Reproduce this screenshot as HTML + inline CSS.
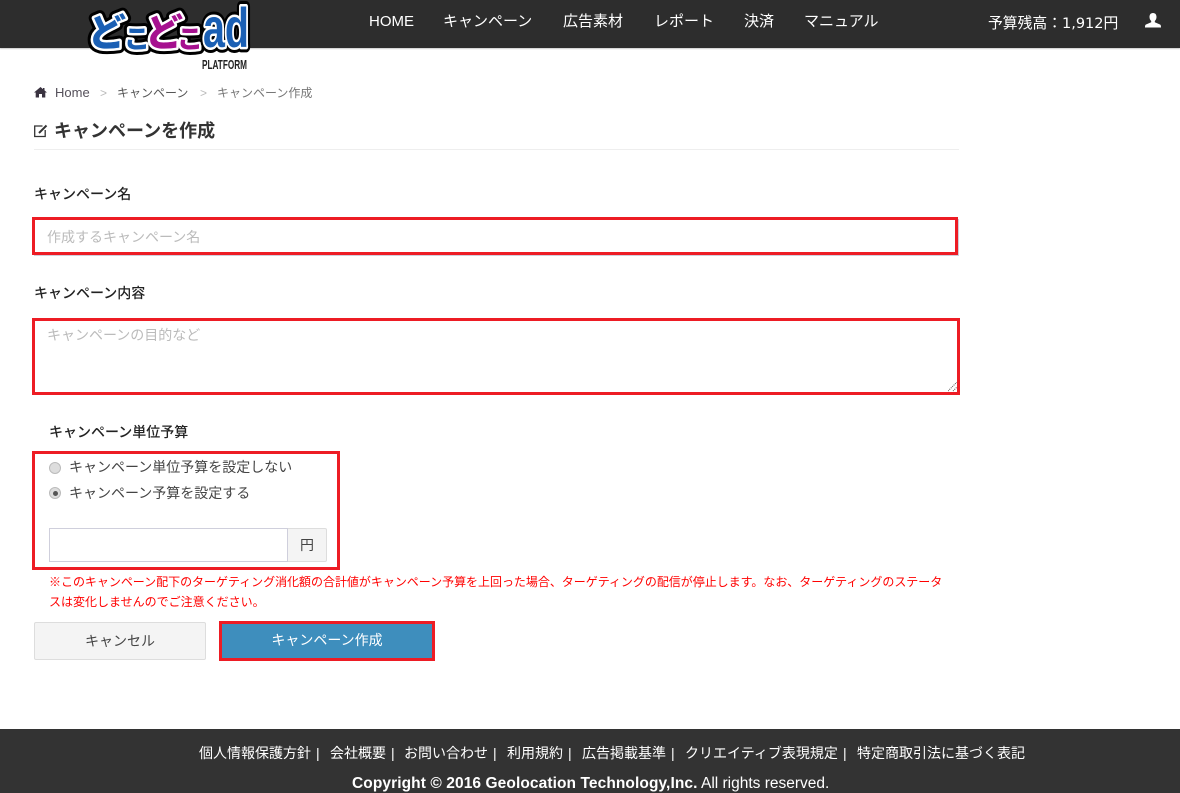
<!DOCTYPE html>
<html lang="ja"><head><meta charset="utf-8"><title>キャンペーンを作成</title>
<style>
*{box-sizing:border-box}
html,body{margin:0;padding:0;width:1180px;height:793px;overflow:hidden;background:#fff}
body{font-family:"Liberation Sans","Noto Sans CJK JP",sans-serif;color:#333;position:relative}
.t{position:absolute;white-space:nowrap;line-height:20px;height:20px}
.b{position:absolute}
.red{position:absolute;border:3px solid #ed1c24}
.w{color:#fff}
.k{stroke:#000;stroke-width:11;stroke-linejoin:round}
.h{stroke:#fff;stroke-width:5;stroke-linejoin:round}
</style></head><body>

<div class="b" style="left:0;top:0;width:1180px;height:48px;background:#2d2d2d;box-shadow:0 1px 1px #ccc"></div>

<svg class="b" style="left:80px;top:0" width="180" height="74" viewBox="0 0 180 74">
<g font-family="'Noto Sans CJK JP',sans-serif" font-weight="900">
<g class="k"><text x="8" y="46" font-size="38">ど</text><text x="44" y="48" font-size="26">こ</text><text x="65" y="46" font-size="38">ど</text><text x="97" y="48" font-size="26">こ</text></g>
<g class="h" fill="#fff"><text x="8" y="46" font-size="38">ど</text><text x="44" y="48" font-size="26">こ</text><text x="65" y="46" font-size="38">ど</text><text x="97" y="48" font-size="26">こ</text></g>
<text x="8" y="46" font-size="38" fill="#1a5fb4">ど</text><text x="44" y="48" font-size="26" fill="#1a5fb4">こ</text>
<text x="65" y="46" font-size="38" fill="#a6118f">ど</text><text x="97" y="48" font-size="26" fill="#a6118f">こ</text>
</g>
<g font-family="'Liberation Sans',sans-serif" font-weight="700" font-size="56">
<text x="123" y="47" textLength="46" lengthAdjust="spacingAndGlyphs" class="k">ad</text>
<text x="123" y="47" textLength="46" lengthAdjust="spacingAndGlyphs" class="h" fill="#fff">ad</text>
<text x="123" y="47" textLength="46" lengthAdjust="spacingAndGlyphs" fill="#1a5fb4">ad</text>
</g>
<text x="122" y="69" font-family="'Liberation Sans',sans-serif" font-weight="700" font-size="13" textLength="45" lengthAdjust="spacingAndGlyphs" fill="#222">PLATFORM</text>
</svg>

<div class="t w" style="left:369px;top:12px;font-size:15px">HOME</div>
<div class="t w" style="left:443px;top:12px;font-size:15px">キャンペーン</div>
<div class="t w" style="left:563px;top:12px;font-size:15px">広告素材</div>
<div class="t w" style="left:654px;top:12px;font-size:15px">レポート</div>
<div class="t w" style="left:744px;top:12px;font-size:15px">決済</div>
<div class="t w" style="left:804px;top:12px;font-size:15px">マニュアル</div>
<div class="t w" style="left:988px;top:13.500px;font-size:14.800px">予算残高：<span style="font-family:'DejaVu Sans','Noto Sans CJK JP',sans-serif;font-size:14.500px">1,912</span>円</div>
<svg class="b" style="left:1145px;top:13px" width="16" height="15" viewBox="0 0 16 15"><path d="M8 0C5.600 0 4.500 1.800 4.500 4c0 1.800.8 3.200 1.700 4v1.300L1 11.500C.3 11.900 0 12.500 0 14.500h16c0-2-.3-2.600-1-3L9.800 9.300V8c.9-.8 1.700-2.200 1.700-4C11.500 1.800 10.400 0 8 0z" fill="#fff"/></svg>

<svg class="b" style="left:34px;top:87px" width="13" height="11" viewBox="0 0 13 11"><path d="M6.500 0L0 5.500h1.700V10.500h3.300V7h3v3.500h3.300V5.500H13L10.500 3.400V1H9v1.100z" fill="#3a3340"/></svg>
<div class="t" style="left:55px;top:83px;font-size:13px;color:#55505a">Home</div>
<div class="t" style="left:100px;top:83px;font-size:12px;color:#bbb">&gt;</div>
<div class="t" style="left:117px;top:83px;font-size:12px;color:#555">キャンペーン</div>
<div class="t" style="left:200px;top:83px;font-size:12px;color:#bbb">&gt;</div>
<div class="t" style="left:217px;top:83px;font-size:12px;color:#777">キャンペーン作成</div>

<svg class="b" style="left:34px;top:124px" width="14" height="14" viewBox="0 0 14 14" fill="none" stroke="#333"><path d="M8.500 2H.7v10.500h10.500V6" stroke-width="1.300"/><path d="M5 9L12.500 1.500" stroke-width="2"/></svg>
<div class="t" style="left:54px;top:121px;font-size:18px;font-weight:700;color:#333">キャンペーンを作成</div>
<div class="b" style="left:34px;top:149px;width:925px;height:1px;background:#eee"></div>

<div class="t" style="left:34px;top:184px;font-size:14px;font-weight:500;color:#222">キャンペーン名</div>
<div class="b" style="left:34px;top:219px;width:925px;height:37px;border:1px solid #cfcfdc"></div>
<div class="red" style="left:32px;top:217px;width:926px;height:38px"></div>
<div class="t" style="left:47px;top:227px;font-size:14px;color:#bbb">作成するキャンペーン名</div>

<div class="t" style="left:34px;top:283px;font-size:14px;font-weight:500;color:#222">キャンペーン内容</div>
<div class="red" style="left:32px;top:318px;width:928px;height:77px"></div>
<div class="t" style="left:47px;top:325px;font-size:14px;color:#bbb">キャンペーンの目的など</div>
<svg class="b" style="left:948px;top:382px" width="9" height="10" viewBox="0 0 9 10" stroke="#555" stroke-dasharray="1 1"><path d="M0 9L9 0M5 9L9 5"/></svg>

<div class="t" style="left:49px;top:422px;font-size:14px;font-weight:500;color:#222">キャンペーン単位予算</div>
<div class="red" style="left:32px;top:451px;width:308px;height:119px"></div>
<div class="b" style="left:49px;top:462px;width:12px;height:12px;border-radius:50%;background:#ddd;border:1px solid #bbb"></div>
<div class="t" style="left:69px;top:457px;font-size:14px;color:#444">キャンペーン単位予算を設定しない</div>
<div class="b" style="left:49px;top:487px;width:12px;height:12px;border-radius:50%;background:#ddd;border:1px solid #bbb"></div>
<div class="b" style="left:52.500px;top:490.500px;width:5px;height:5px;border-radius:50%;background:#555"></div>
<div class="t" style="left:69px;top:483px;font-size:14px;color:#444">キャンペーン予算を設定する</div>
<div class="b" style="left:49px;top:528px;width:239px;height:34px;border:1px solid #cfcfdc;background:#fff"></div>
<div class="b" style="left:288px;top:528px;width:39px;height:34px;border:1px solid #ddd;border-left:0;background:#f4f4f4;border-radius:0 2px 2px 0"></div>
<div class="t" style="left:300px;top:535px;font-size:14px;color:#444">円</div>

<div class="t" style="left:49px;top:572px;font-size:12px;color:#f00;letter-spacing:-.03px">※このキャンペーン配下のターゲティング消化額の合計値がキャンペーン予算を上回った場合、ターゲティングの配信が停止します。なお、ターゲティングのステータ</div>
<div class="t" style="left:49px;top:592px;font-size:12px;color:#f00">スは変化しませんのでご注意ください。</div>

<div class="b" style="left:34px;top:622px;width:172px;height:38px;background:#f4f4f4;border:1px solid #ddd;border-radius:2px;text-align:center;line-height:37px;font-size:14px;color:#444">キャンセル</div>
<div class="b" style="left:219px;top:621px;width:216px;height:40px;background:#3e8ebd;border:3px solid #ed1c24;text-align:center;line-height:33px;font-size:14px;color:#fff">キャンペーン作成</div>

<div class="b" style="left:0;top:729px;width:1180px;height:64px;background:#333"></div>
<div class="t w" style="left:199px;top:743px;font-size:14px">個人情報保護方針</div>
<div class="t w" style="left:316px;top:743px;font-size:14px">|</div>
<div class="t w" style="left:330px;top:743px;font-size:14px">会社概要</div>
<div class="t w" style="left:391px;top:743px;font-size:14px">|</div>
<div class="t w" style="left:404px;top:743px;font-size:14px">お問い合わせ</div>
<div class="t w" style="left:493px;top:743px;font-size:14px">|</div>
<div class="t w" style="left:507px;top:743px;font-size:14px">利用規約</div>
<div class="t w" style="left:568px;top:743px;font-size:14px">|</div>
<div class="t w" style="left:582px;top:743px;font-size:14px">広告掲載基準</div>
<div class="t w" style="left:671px;top:743px;font-size:14px">|</div>
<div class="t w" style="left:685px;top:743px;font-size:14px">クリエイティブ表現規定</div>
<div class="t w" style="left:843px;top:743px;font-size:14px">|</div>
<div class="t w" style="left:857px;top:743px;font-size:14px">特定商取引法に基づく表記</div>
<div class="t w" style="left:352px;top:774px;font-size:15.500px"><b style="letter-spacing:.09px">Copyright © 2016 Geolocation Technology,Inc.</b> All rights reserved.</div>
</body></html>
